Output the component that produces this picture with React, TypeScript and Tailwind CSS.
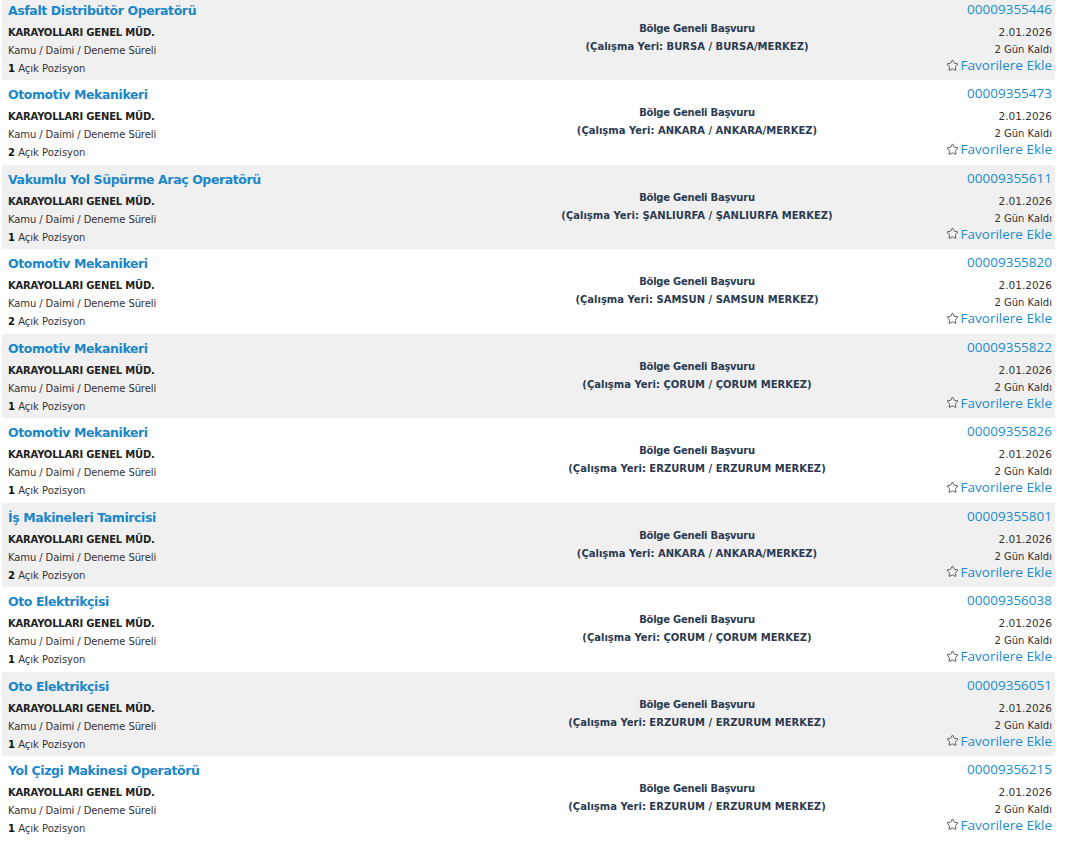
import { Star } from "lucide-react";

type Ilan = {
  title: string;
  count: number;
  city: string;
  no: string;
};

const ilanlar: Ilan[] = [
  { title: "Asfalt Distribütör Operatörü", count: 1, city: "BURSA / BURSA/MERKEZ", no: "00009355446" },
  { title: "Otomotiv Mekanikeri", count: 2, city: "ANKARA / ANKARA/MERKEZ", no: "00009355473" },
  { title: "Vakumlu Yol Süpürme Araç Operatörü", count: 1, city: "ŞANLIURFA / ŞANLIURFA MERKEZ", no: "00009355611" },
  { title: "Otomotiv Mekanikeri", count: 2, city: "SAMSUN / SAMSUN MERKEZ", no: "00009355820" },
  { title: "Otomotiv Mekanikeri", count: 1, city: "ÇORUM / ÇORUM MERKEZ", no: "00009355822" },
  { title: "Otomotiv Mekanikeri", count: 1, city: "ERZURUM / ERZURUM MERKEZ", no: "00009355826" },
  { title: "İş Makineleri Tamircisi", count: 2, city: "ANKARA / ANKARA/MERKEZ", no: "00009355801" },
  { title: "Oto Elektrikçisi", count: 1, city: "ÇORUM / ÇORUM MERKEZ", no: "00009356038" },
  { title: "Oto Elektrikçisi", count: 1, city: "ERZURUM / ERZURUM MERKEZ", no: "00009356051" },
  { title: "Yol Çizgi Makinesi Operatörü", count: 1, city: "ERZURUM / ERZURUM MERKEZ", no: "00009356215" },
];

function IlanRow({ ilan, odd }: { ilan: Ilan; odd: boolean }) {
  return (
    <div className={`flex h-[84.44px] ${odd ? "bg-[#f0f0f0]" : "bg-white"}`}>
      <div className="w-[537px] pl-[6px] pt-[5px] flex flex-col">
        <a className="text-[12.5px] font-bold text-[#1a87c9] leading-[20px] tracking-[-0.4px]">{ilan.title}</a>
        <div className="text-[10px] font-bold text-[#222] leading-[18px] mt-[3px] tracking-[-0.2px]">KARAYOLLARI GENEL MÜD.</div>
        <div className="text-[10px] text-[#333] leading-[18px] tracking-[-0.1px]">Kamu / Daimi / Deneme Süreli</div>
        <div className="text-[10px] text-[#333] leading-[18px]">
          <b className="text-[#111]">{ilan.count}</b> Açık Pozisyon
        </div>
      </div>
      <div className="flex-1 flex flex-col items-center pt-[24px] text-[10px] font-bold text-[#2b3a50] leading-[18px]">
        <div className="tracking-[-0.25px]">Bölge Geneli Başvuru</div>
        <div>(Çalışma Yeri: {ilan.city})</div>
      </div>
      <div className="w-[200px] pr-[3px] pt-[3px] flex flex-col items-end">
        <a className="text-[13.5px] text-[#1a8ccc] leading-[20px] font-['Open_Sans',sans-serif]">{ilan.no}</a>
        <div className="text-[10.5px] text-[#333] leading-[18px] mt-[4px]">2.01.2026</div>
        <div className="text-[10px] text-[#333] leading-[17px]">2 Gün Kaldı</div>
        <a className="flex items-center gap-[2px] text-[13.5px] text-[#1a8ccc] leading-[14px] font-['Open_Sans',sans-serif]">
          <Star size={13} strokeWidth={1.6} className="text-[#444]" />
          Favorilere Ekle
        </a>
      </div>
    </div>
  );
}

export default function App() {
  return (
    <div className="w-[1068px] h-[841px] overflow-hidden bg-white font-['DejaVu_Sans',sans-serif]">
      <div className="w-[1053px] ml-[2px] -mt-[4px]">
        {ilanlar.map((ilan, i) => (
          <IlanRow key={i} ilan={ilan} odd={i % 2 === 0} />
        ))}
      </div>
    </div>
  );
}
